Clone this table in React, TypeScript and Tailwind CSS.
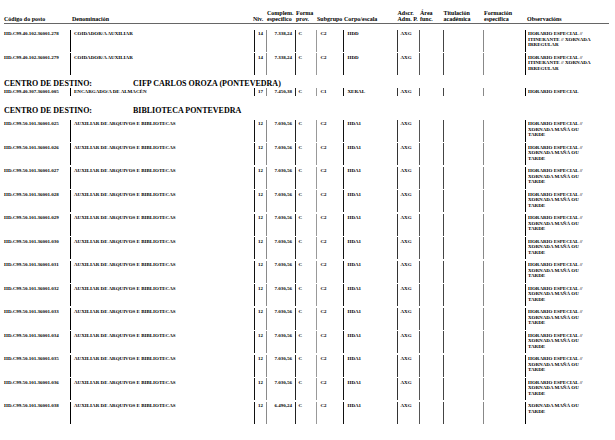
import React from 'react';

type Posto = {
  code: string;
  den: string;
  niv: string;
  comp: string;
  sub: string;
  corpo: string;
  obs: string[];
  short?: boolean;
};

const cols = 'grid grid-cols-[70px_184px_12px_29px_21px_27px_54px_22px_24px_40px_42px_90px]';

const OBS_ITIN = ['HORARIO ESPECIAL //', 'ITINERANTE // XORNADA', 'IRREGULAR'];
const OBS_BIB = ['HORARIO ESPECIAL //', 'XORNADA MAÑÁ OU', 'TARDE'];

const primeiros: Posto[] = [
  { code: 'HD.C99.40.102.36001.278', den: 'COIDADOR/A AUXILIAR', niv: '14', comp: '7.338,24', sub: 'C2', corpo: 'HDD', obs: OBS_ITIN },
  { code: 'HD.C99.40.102.36001.279', den: 'COIDADOR/A AUXILIAR', niv: '14', comp: '7.338,24', sub: 'C2', corpo: 'HDD', obs: OBS_ITIN },
];

const cifp: Posto[] = [
  { code: 'HD.C99.40.307.36001.005', den: 'ENCARGADO/A DE ALMACÉN', niv: '17', comp: '7.450,38', sub: 'C1', corpo: 'XERAL', obs: ['HORARIO ESPECIAL'], short: true },
];

const biblioteca: Posto[] = [
  '025', '026', '027', '028', '029', '030', '031', '032', '033', '034', '035', '036',
].map(n => ({
  code: `HD.C99.50.101.36001.${n}`,
  den: 'AUXILIAR DE ARQUIVOS E BIBLIOTECAS',
  niv: '12',
  comp: '7.030,56',
  sub: 'C2',
  corpo: 'HDA1',
  obs: OBS_BIB,
}));
biblioteca.push({
  code: 'HD.C99.50.101.36001.038',
  den: 'AUXILIAR DE ARQUIVOS E BIBLIOTECAS',
  niv: '12',
  comp: '6.490,24',
  sub: 'C2',
  corpo: 'HDA1',
  obs: ['XORNADA MAÑÁ OU', 'TARDE'],
});

function PostoRow({ p }: { p: Posto }) {
  return (
    <div className={`${cols} ${p.short ? 'h-[8px]' : 'h-[22px] mb-[1.5px]'} text-[5px] leading-[5.5px]`}>
      <div className="pl-[4px] pt-[1.5px] whitespace-nowrap">{p.code}</div>
      <div className="border-l border-black pl-[3px] pt-[1.5px] whitespace-nowrap">{p.den}</div>
      <div className="border-l border-[#111] pt-[1.5px] text-center">{p.niv}</div>
      <div className="border-l border-[#8a8a8a] pr-[3px] pt-[1.5px] text-right">{p.comp}</div>
      <div className="border-l border-[#222] pl-[2.5px] pt-[1.5px]">C</div>
      <div className="border-l border-[#999] pl-[3.5px] pt-[1.5px]">{p.sub}</div>
      <div className="border-l border-[#111] pl-[3.5px] pt-[1.5px]">{p.corpo}</div>
      <div className="border-l border-[#333] pl-[2.5px] pt-[1.5px]">AXG</div>
      <div className="border-l border-[#555]" />
      <div className="border-l border-[#444]" />
      <div className="border-l border-[#888]" />
      <div className="border-l-[1.5px] border-black pl-[2px] pt-[1.5px] whitespace-nowrap">
        {p.obs.map(l => (
          <div key={l}>{l}</div>
        ))}
      </div>
    </div>
  );
}

function Centro({ nome, className }: { nome: string; className: string }) {
  return (
    <div className={`flex h-[8px] text-[8px] leading-[8px] ${className}`}>
      <div className="w-[133px] pl-[4px]">CENTRO DE DESTINO:</div>
      <div>{nome}</div>
    </div>
  );
}

export default function App() {
  return (
    <div className="w-[615px] h-[440px] overflow-hidden bg-white text-black font-bold font-['Liberation_Serif','Times_New_Roman',serif]">
      {/* cabeceira */}
      <div className="ml-[4px] mr-[6px] border-b border-[#666]">
        <div className={`${cols} -ml-[4px] h-[23px] items-end text-[6px] leading-[5.5px] pb-[1px]`}>
          <div className="pl-[4px]">Código do posto</div>
          <div className="pl-[2px]">Denominación</div>
          <div className="-ml-[1px] whitespace-nowrap">Niv.</div>
          <div className="pl-[1px]">
            <div>Complem.</div>
            <div>específico</div>
          </div>
          <div className="pl-[1px]">
            <div>Forma</div>
            <div>prov.</div>
          </div>
          <div className="pl-[1px]">Subgrupo</div>
          <div className="pl-[1px]">Corpo/escala</div>
          <div className="pl-[0.5px] whitespace-nowrap">
            <div>Adscr.</div>
            <div>Adm. P.</div>
          </div>
          <div className="pl-[1px]">
            <div>Área</div>
            <div>func.</div>
          </div>
          <div className="pl-[0.5px]">
            <div>Titulación</div>
            <div>académica</div>
          </div>
          <div className="pl-[1px]">
            <div>Formación</div>
            <div>específica</div>
          </div>
          <div className="pl-[2px]">Observacións</div>
        </div>
      </div>

      <div className="mt-[5.5px]">
        {primeiros.map(p => (
          <PostoRow key={p.code} p={p} />
        ))}
      </div>

      <Centro nome="CIFP CARLOS OROZA (PONTEVEDRA)" className="mt-[4.5px]" />
      <div>
        {cifp.map(p => (
          <PostoRow key={p.code} p={p} />
        ))}
      </div>

      <Centro nome="BIBLIOTECA PONTEVEDRA" className="mt-[11px]" />
      <div className="mt-[5px]">
        {biblioteca.map(p => (
          <PostoRow key={p.code} p={p} />
        ))}
      </div>
    </div>
  );
}
